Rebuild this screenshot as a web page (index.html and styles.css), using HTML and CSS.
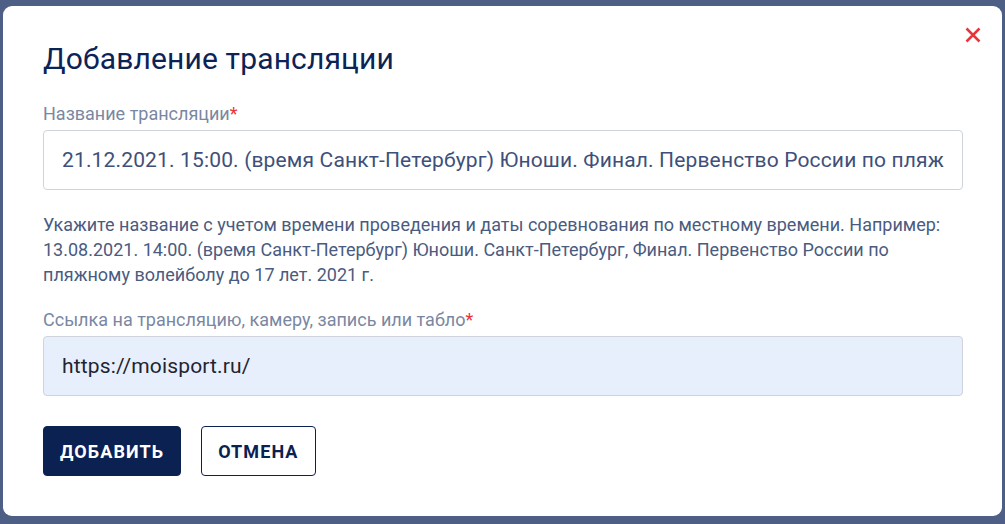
FILE: index.html
```html
<!DOCTYPE html>
<html lang="ru">
<head>
    <meta charset="UTF-8">
    <meta name="viewport" content="width=device-width, initial-scale=1.0">
    <title>Добавление трансляции</title>
    <link rel="stylesheet" href="styles.css">
</head>
<body>
    <div class="modal">
        <button class="close" aria-label="Закрыть">
            <svg width="16" height="16" viewBox="0 0 16 16">
                <path d="M1.5 1.5 L14.5 14.5 M14.5 1.5 L1.5 14.5" stroke="#e8343a" stroke-width="2.5" fill="none"/>
            </svg>
        </button>
        <h1>Добавление трансляции</h1>

        <label class="label" for="title">Название трансляции<span class="req">*</span></label>
        <input id="title" class="field" type="text" value="21.12.2021. 15:00. (время Санкт-Петербург) Юноши. Финал. Первенство России по пляжному волейболу до 17 лет. 2021 г.">

        <p class="hint">Укажите название с учетом времени проведения и даты соревнования по местному времени. Например: 13.08.2021. 14:00. (время Санкт-Петербург) Юноши. Санкт-Петербург, Финал. Первенство России по пляжному волейболу до 17 лет. 2021 г.</p>

        <label class="label" for="link">Ссылка на трансляцию, камеру, запись или табло<span class="req">*</span></label>
        <input id="link" class="field filled" type="text" value="https://moisport.ru/">

        <div class="actions">
            <button class="btn primary">Добавить</button>
            <button class="btn outline">Отмена</button>
        </div>
    </div>
</body>
</html>
```

FILE: styles.css
```css
html, body {
    margin: 0;
    height: 100%;
}
body {
    font-family: Roboto, 'Liberation Sans', sans-serif;
    background-color: #4e5f86;
    padding: 6px 3px;
    box-sizing: border-box;
    overflow: hidden;
}
.modal {
    position: relative;
    width: 999px;
    height: 510px;
    box-sizing: border-box;
    background: #fff;
    border-radius: 9px;
    padding: 35px 39px 40px 40px;
}
.close {
    position: absolute;
    top: 21px;
    right: 21px;
    width: 16px;
    height: 16px;
    padding: 0;
    border: none;
    background: none;
    cursor: pointer;
}
.close svg {
    display: block;
}
h1 {
    margin: 0;
    font-size: 30px;
    line-height: 36px;
    font-weight: 400;
    letter-spacing: 0.15px;
    color: #0b2356;
}
.label {
    display: block;
    margin-top: 26px;
    font-size: 18px;
    line-height: 22px;
    color: #7a87a2;
}
.req {
    color: #e8343a;
}
.field {
    display: block;
    width: 100%;
    margin: 5px 0 0;
    height: 60px;
    box-sizing: border-box;
    border: 1px solid #cfd3dc;
    border-radius: 4px;
    padding: 0 18px;
    font-family: Roboto, sans-serif;
    font-size: 21px;
    letter-spacing: 0.15px;
    color: #3e5079;
    background: #fff;
    outline: none;
}
.field.filled {
    background: #e8effc;
    color: #1f2430;
}
.hint {
    margin: 22px 0 0;
    font-size: 18px;
    line-height: 25px;
    color: #4a5b80;
}
.hint + .label {
    margin-top: 22px;
}
.actions {
    display: flex;
    gap: 20px;
    margin-top: 30px;
}
.btn {
    height: 50px;
    box-sizing: border-box;
    border-radius: 4px;
    padding: 0 16px;
    font-family: Roboto, sans-serif;
    font-size: 18px;
    font-weight: 700;
    letter-spacing: 1.1px;
    text-transform: uppercase;
    cursor: pointer;
}
.primary {
    background: #0b2152;
    border: 1px solid #0b2152;
    color: #fff;
}
.outline {
    background: #fff;
    border: 1px solid #0b2152;
    color: #0b2152;
}
```
